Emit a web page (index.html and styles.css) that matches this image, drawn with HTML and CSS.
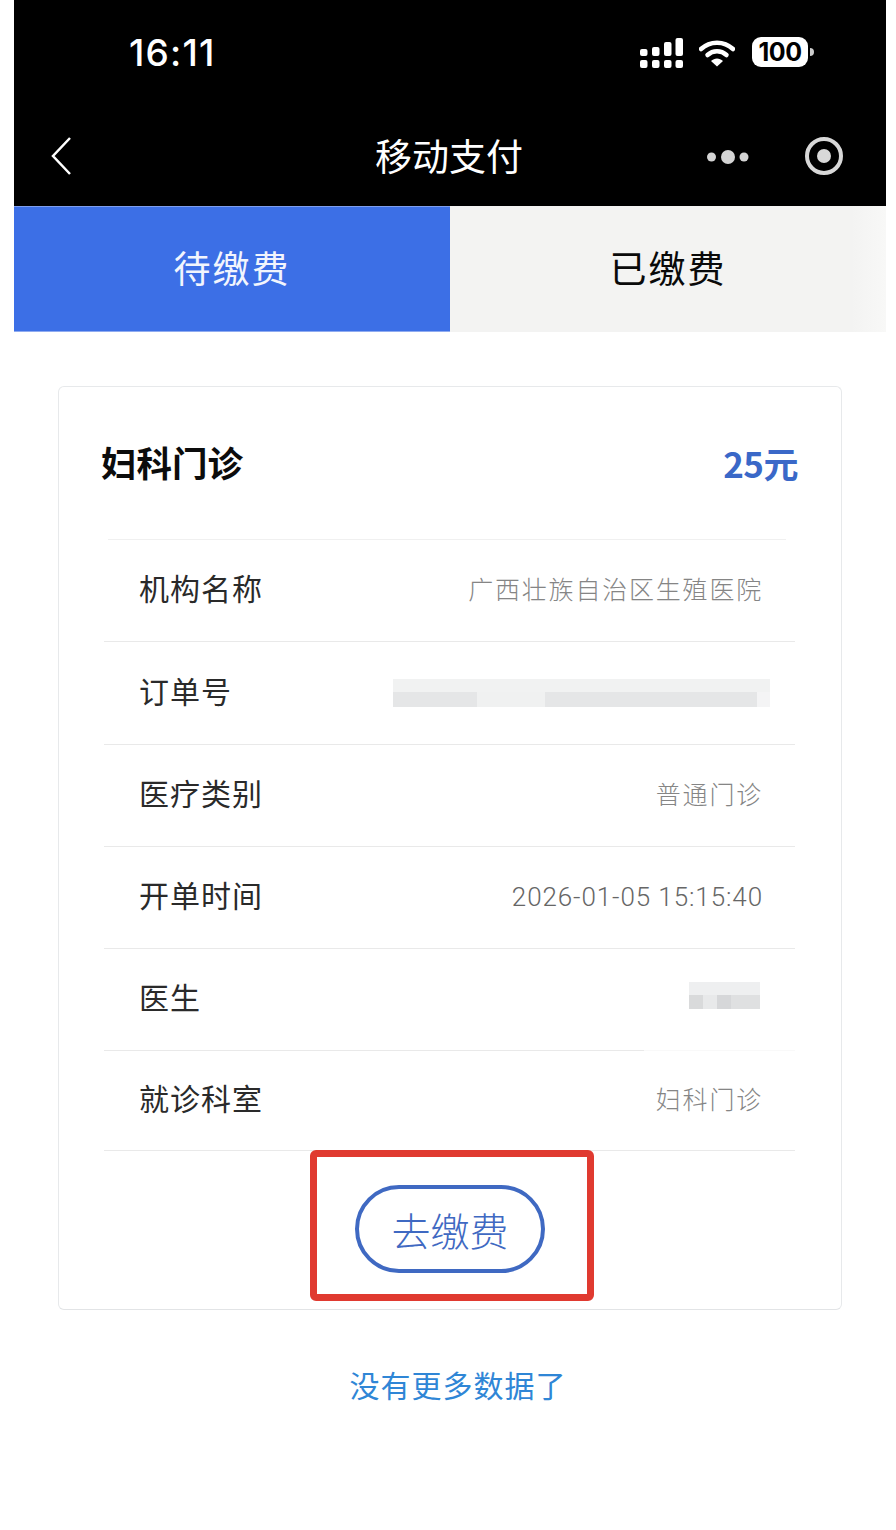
FILE: index.html
```html
<!DOCTYPE html>
<html lang="zh-CN">
  <head>
    <meta charset="utf-8">
    <title>移动支付</title>
    <link rel="stylesheet" href="styles.css">
  </head>
  <body>
    <div class="phone">
      <div class="status">
        <span class="time">16:11</span>
        <div class="status-icons">
          <svg class="signal" width="44" height="30" viewBox="0 0 44 30" fill="#fff">
            <rect x="0" y="11" width="7.5" height="7" rx="2"/>
            <rect x="12" y="9" width="7.5" height="9" rx="2"/>
            <rect x="24" y="4" width="7.5" height="14" rx="2"/>
            <rect x="35.500" y="0" width="7.500" height="18" rx="2"/>
            <rect x="0" y="22" width="7.5" height="8" rx="2"/>
            <rect x="12" y="22" width="7.5" height="8" rx="2"/>
            <rect x="24" y="22" width="7.5" height="8" rx="2"/>
            <rect x="35.500" y="22" width="7.500" height="8" rx="2"/>
          </svg>
          <svg class="wifi" width="36" height="28" viewBox="0 0 36 28">
            <path d="M2 10 C11 1.500 25 1.500 34 10" fill="none" stroke="#fff" stroke-width="4.500" stroke-linecap="round"/>
            <path d="M8.500 16 C14 11 22 11 27.500 16" fill="none" stroke="#fff" stroke-width="4.500" stroke-linecap="round"/>
            <path d="M12 22 C15.500 18.500 20.500 18.500 24 22 L18 27.500 Z" fill="#fff"/>
          </svg>
          <div class="battery">100</div>
          <span class="battery-nub"></span>
        </div>
      </div>
      <div class="nav">
        <svg class="back" width="20" height="40" viewBox="0 0 20 40">
          <path d="M19 2 L2 20 L19 38" fill="none" stroke="#fff" stroke-width="2.500"/>
        </svg>
        <span class="nav-title">移动支付</span>
        <svg class="more" width="42" height="14" viewBox="0 0 42 14" fill="#d4d4d4">
          <circle cx="4.500" cy="7" r="4.500"/>
          <circle cx="21" cy="7" r="7"/>
          <circle cx="37" cy="7" r="4.500"/>
        </svg>
        <svg class="target" width="38" height="38" viewBox="0 0 38 38">
          <circle cx="19" cy="19" r="17" fill="none" stroke="#d8d8d8" stroke-width="4"/>
          <circle cx="19" cy="19" r="7" fill="#d8d8d8"/>
        </svg>
      </div>
      <div class="tabs">
        <div class="tab tab-on">待缴费</div>
        <div class="tab">已缴费</div>
      </div>
    </div>

    <div class="card">
      <div class="card-head">
        <span class="card-title">妇科门诊</span>
        <span class="amount">25元</span>
      </div>
      <div class="row">
        <span class="label">机构名称</span>
        <span class="value">广西壮族自治区生殖医院</span>
      </div>
      <div class="row row-tall">
        <span class="label">订单号</span>
        <span class="blur-order"></span>
      </div>
      <div class="row">
        <span class="label">医疗类别</span>
        <span class="value">普通门诊</span>
      </div>
      <div class="row">
        <span class="label">开单时间</span>
        <span class="value value-date">2026-01-05 15:15:40</span>
      </div>
      <div class="row row-fade">
        <span class="label">医生</span>
        <span class="blur-name"></span>
      </div>
      <div class="row row-last">
        <span class="label">就诊科室</span>
        <span class="value">妇科门诊</span>
      </div>
      <div class="actions">
        <div class="mark">
          <div class="pay-btn">去缴费</div>
        </div>
      </div>
    </div>

    <div class="no-more">没有更多数据了</div>
  </body>
</html>
```

FILE: styles.css
```css
* {
  box-sizing: border-box;
}
body {
  margin: 0;
  height: 1530px;
  overflow: hidden;
  background: #fff;
  font-family: "Noto Sans CJK SC", "Liberation Sans", sans-serif;
}
.phone {
  width: 872px;
  margin-left: 14px;
  background: #000;
  color: #fff;
}
.status {
  height: 110px;
  display: flex;
  align-items: flex-start;
  justify-content: space-between;
  padding: 27px 72px 0 115px;
}
.time {
  font-family: Inter, "Liberation Sans", sans-serif;
  font-size: 37px;
  font-weight: 500;
  line-height: 52px;
  letter-spacing: 1.200px;
}
.status-icons {
  display: flex;
  align-items: flex-start;
  padding-top: 10px;
}
.signal {
  margin-top: 1px;
}
.wifi {
  margin: 2px 0 0 15px;
}
.battery {
  width: 56px;
  height: 30px;
  margin-left: 17px;
  border-radius: 9px;
  background: #fff;
  color: #000;
  font-family: Inter, "Liberation Sans", sans-serif;
  font-size: 25px;
  font-weight: 700;
  line-height: 30px;
  letter-spacing: -0.5px;
  text-align: center;
}
.battery-nub {
  width: 4px;
  height: 8px;
  margin: 11px 0 0 2px;
  border-radius: 0 4px 4px 0;
  background: #ccc;
}
.nav {
  height: 96px;
  display: flex;
  align-items: center;
  padding: 0 43px 4px 37px;
  position: relative;
}
.nav-title {
  position: absolute;
  left: 361px;
  top: 18px;
  font-size: 37px;
  line-height: 54px;
}
.more {
  margin-left: auto;
  margin-top: 2px;
}
.target {
  margin-left: 56px;
}
.tabs {
  height: 126px;
  display: flex;
}
.tab {
  flex: 1;
  display: flex;
  align-items: center;
  justify-content: center;
  background: linear-gradient(90deg, #f3f3f2 92%, #f8f8f7);
  color: #0a0a0a;
  font-size: 37px;
  letter-spacing: 2px;
  padding-bottom: 5px;
}
.tab-on {
  background: #3c6fe6;
  color: #f2f5fd;
  border-top: 1px solid #7f9fee;
  border-bottom: 1px solid #8fabf0;
}
.card {
  width: 784px;
  height: 924px;
  margin: 54px 0 0 58px;
  padding: 0 46px;
  border: 1px solid #e7e9eb;
  border-bottom-color: #e2e4e6;
  border-radius: 6px;
  background: #fff;
}
.card-head {
  height: 153px;
  display: flex;
  align-items: center;
  justify-content: space-between;
  margin: 0 9px 0 3px;
  padding-bottom: 2px;
  border-bottom: 1px solid #f0f0f0;
}
.card-title {
  margin-left: -7px;
  font-size: 35.500px;
  font-weight: 700;
  color: #0c0c0c;
  line-height: 1.3;
}
.amount {
  margin-right: -12px;
  font-size: 35px;
  font-weight: 700;
  letter-spacing: -0.5px;
  color: #3a68c8;
}
.row {
  height: 102px;
  display: flex;
  align-items: center;
  justify-content: space-between;
  margin: 0 0 0 -1px;
  padding: 0 33px 7px 35px;
  border-bottom: 1px solid #e9e9e9;
}
.row-tall {
  height: 103px;
}
.row-last {
  height: 100px;
}
.row-fade {
  border-image: linear-gradient(90deg, #e9e9e9 78%, #f9f9f9 78%) 1;
}
.label {
  font-size: 30px;
  letter-spacing: 1px;
  color: #2a2a2a;
}
.value {
  margin-top: 2px;
  margin-right: -1px;
  font-size: 25px;
  letter-spacing: 1.800px;
  font-weight: 300;
  color: #858585;
}
.value-date {
  margin-top: 5px;
  font-family: Roboto, "Liberation Sans", sans-serif;
  font-size: 26px;
  font-weight: 300;
  letter-spacing: 0.900px;
  color: #666;
}
.blur-order {
  width: 377px;
  height: 28px;
  margin: 7px -8px 0 0;
  background:
    linear-gradient(#f1f2f2 45%, transparent 45%),
    linear-gradient(90deg, #e5e6e7 0 84px, #f0f1f1 84px 152px, #e5e6e7 152px 364px, #f4f4f5 364px);
}
.blur-name {
  width: 71px;
  height: 27px;
  margin-top: -2px;
  margin-right: 2px;
  background:
    linear-gradient(#eeeff0 48%, transparent 48%),
    linear-gradient(90deg, #d9dadb 0 14px, #e8e9ea 14px 28px, #d6d7d9 28px 42px, #dfe0e1 42px);
}
.actions {
  display: flex;
  justify-content: center;
  margin-top: -1px;
}
.mark {
  width: 284px;
  height: 151px;
  margin-left: 4px;
  display: flex;
  align-items: center;
  justify-content: center;
  padding: 6px 4px 0 0;
  border: 7px solid #e03a30;
  border-radius: 6px;
}
.pay-btn {
  width: 190px;
  height: 88px;
  border: 4px solid #3f69c2;
  border-radius: 44px;
  display: flex;
  align-items: center;
  justify-content: center;
  font-size: 39px;
  font-weight: 300;
  color: #3f69c2;
}
.no-more {
  margin-top: 52px;
  padding-left: 20px;
  text-align: center;
  font-size: 30px;
  line-height: 44px;
  letter-spacing: 1px;
  color: #2f86d6;
}
```
